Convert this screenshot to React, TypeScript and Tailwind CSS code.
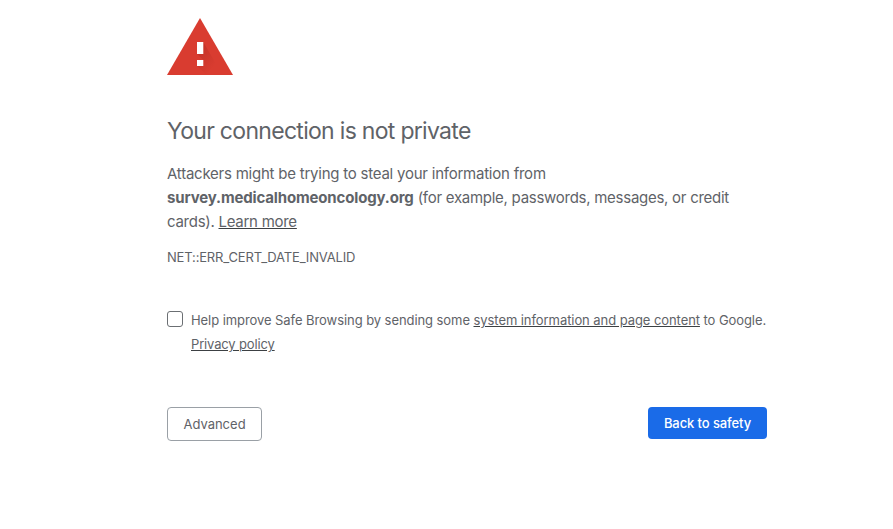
export default function App() {
  return (
    <div className="min-h-[529px] w-full overflow-hidden bg-white pl-[167px] pt-[18px] font-['Inter','Roboto',sans-serif] text-[#5f6368]">
      <div className="w-[600px]">
        {/* Warning icon */}
        <svg width="66" height="57" viewBox="0 0 66 57" className="block">
          <defs>
            <linearGradient id="warnShadow" x1="0.1" y1="0.1" x2="0.9" y2="0.9">
              <stop offset="0" stopColor="#8e1c14" stopOpacity="0.3" />
              <stop offset="0.75" stopColor="#8e1c14" stopOpacity="0" />
            </linearGradient>
          </defs>
          <path d="M33 0L66 57H0z" fill="#d93c30" />
          <path d="M36.3 24L55.5 57H40L30 48l6.3-6-6.3-6z" fill="url(#warnShadow)" />
          <path d="M30 24h6.3v12H30zM30 42h6.3v6H30z" fill="#fff" />
        </svg>

        <h1 className="mt-[41px] text-[23px] leading-[30px] font-normal tracking-[-0.7px]">Your connection is not private</h1>

        <p className="mt-[16px] text-[15px] leading-[24px] tracking-[-0.23px]">
          Attackers might be trying to steal your information from <br />
          <strong className="font-bold tracking-[-0.15px]">survey.medicalhomeoncology.org</strong>{" "}
          <span className="tracking-[-0.27px]">
            (for example, passwords, messages, or credit cards). <a className="underline decoration-[#3c4043]">Learn more</a>
          </span>
        </p>

        <div className="mt-[15px] text-[13px] leading-[16px] tracking-[-0.17px]">NET::ERR_CERT_DATE_INVALID</div>

        <div className="mt-[43px] flex gap-2">
          <div className="mt-[3px] h-4 w-4 shrink-0 rounded-[3px] border border-[#6b6f73] bg-white" />
          <p className="text-[13px] leading-[24px] tracking-[-0.07px] whitespace-nowrap">
            Help improve Safe Browsing by sending some <a className="underline decoration-[#3c4043]">system information and page content</a> to Google.
            <br />
            <a className="underline decoration-[#3c4043] tracking-[-0.15px]">Privacy policy</a>
          </p>
        </div>

        <div className="mt-[51px] flex items-start justify-between">
          <button className="h-[34px] w-[95px] rounded-[4px] border border-[#9aa0a6] bg-white pt-px text-[13px] text-[#5f6368]">Advanced</button>
          <button className="h-[32px] w-[119px] rounded-[4px] bg-[#1a6be8] pt-px text-[13px] font-medium tracking-[-0.1px] text-white">Back to safety</button>
        </div>
      </div>
    </div>
  );
}
